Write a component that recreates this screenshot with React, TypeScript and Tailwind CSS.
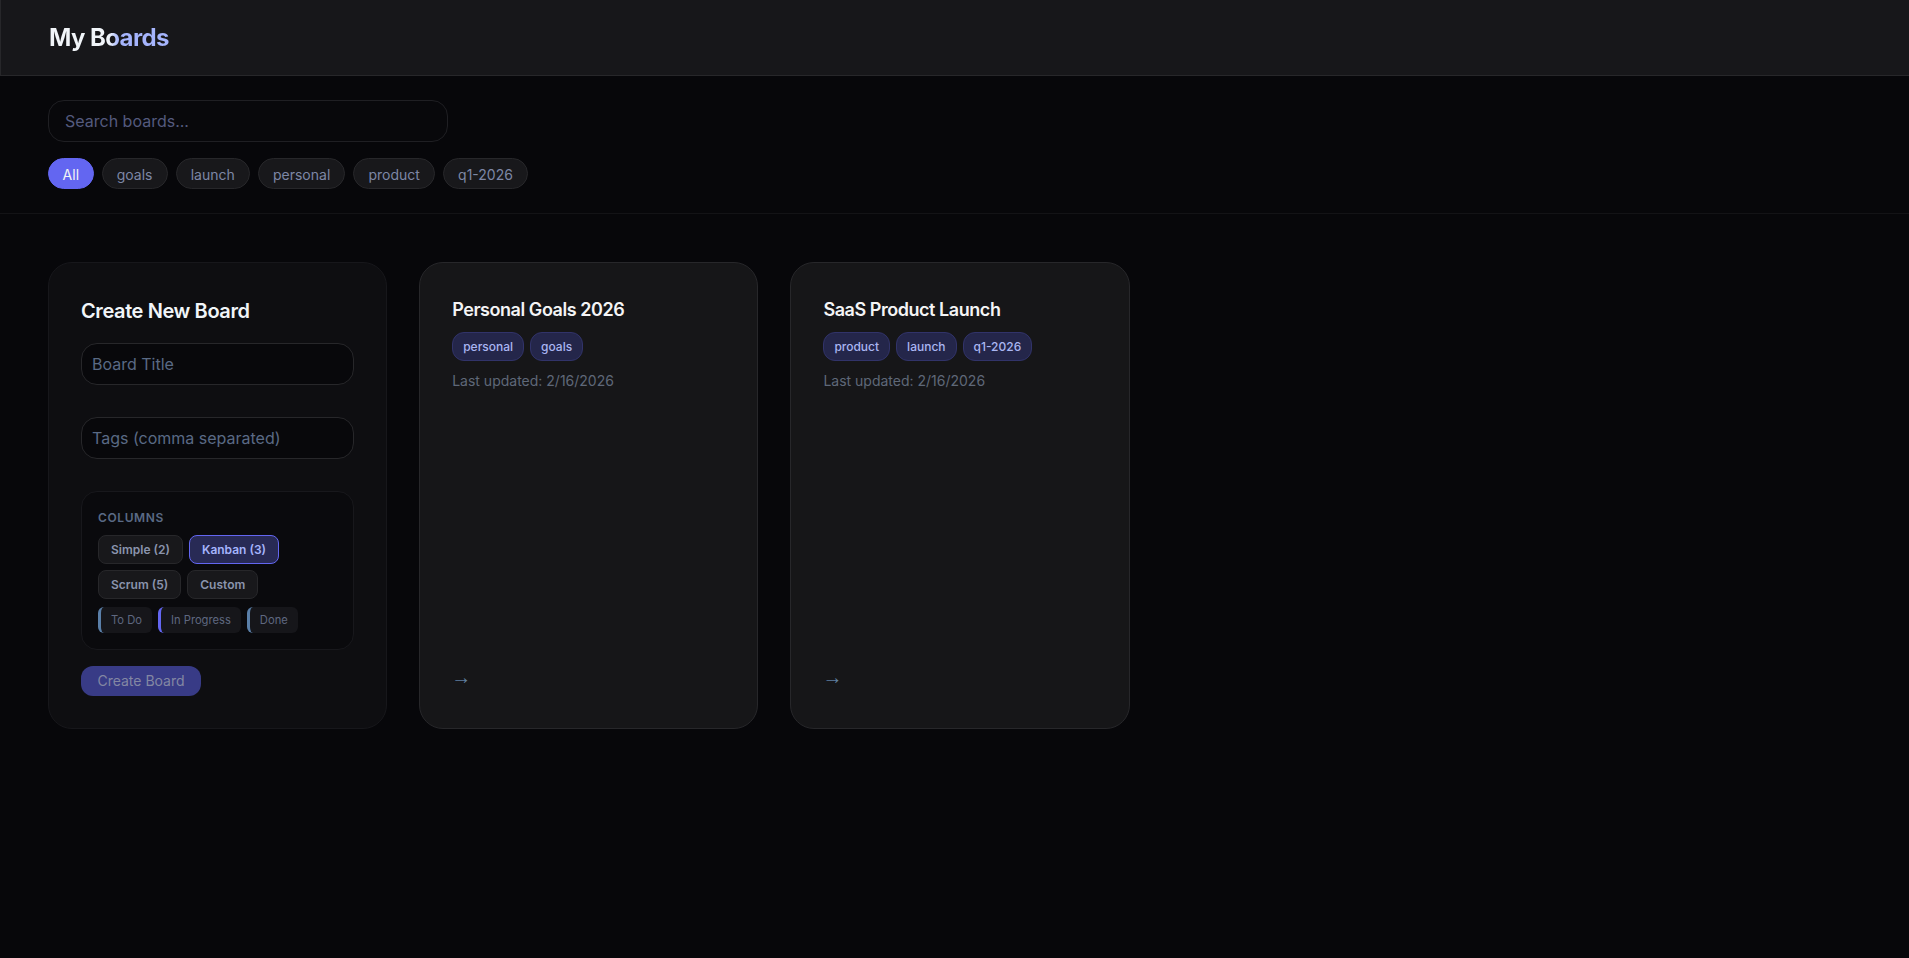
import React from "react";

const filters = ["goals", "launch", "personal", "product", "q1-2026"];

function Board({ title, tags }: { title: string; tags: string[] }) {
  return (
    <div className="flex flex-col rounded-[24px] border border-[#27272a] bg-[#161618] p-[32px]">
      <h3 className="text-[18px] leading-[30px] font-semibold tracking-[-0.45px] text-[#f4f4f5] mb-[7px]">{title}</h3>
      <div className="flex gap-[6px] mb-[9px]">
        {tags.map((t) => (
          <span key={t} className="h-[29px] flex items-center rounded-[12px] border border-[#313369] bg-[#24264a] px-[10px] text-[12px] font-medium text-[#aab6f2]">
            {t}
          </span>
        ))}
      </div>
      <p className="text-[14px] leading-[21px] text-[#5f6878]">Last updated: 2/16/2026</p>
      <div className="mt-auto -ml-[1px] text-[20px] leading-[37px] text-[#5f7f9f] font-['Liberation_Sans',sans-serif]">→</div>
    </div>
  );
}

export default function App() {
  return (
    <div className="min-h-[958px] bg-[#07070a] font-['Inter',sans-serif]">
      <header className="h-[76px] border-b border-l border-[#27272a] bg-[#17171a] pl-[48px] flex items-center">
        <h1 className="text-[24px] font-bold tracking-[-0.6px] bg-gradient-to-r from-[#f1f5f9] from-[50%] to-[#a5b4fc] to-[58%] bg-clip-text text-transparent">My Boards</h1>
      </header>

      <section className="border-b border-[#131316] px-[48px] py-[24px]">
        <div className="w-[400px] h-[42px] rounded-[16px] border border-[#1f1f23] bg-[#08080b] px-[16px] flex items-center text-[16px] text-[#545a7e]">
          Search boards...
        </div>
        <div className="flex gap-[8px] mt-[16px]">
          <span className="h-[31px] flex items-center rounded-full border border-[#6366f1] bg-[#6366f1] px-[13.6px] pt-[1px] text-[14px] text-[#f4f4f5]">All</span>
          {filters.map((f) => (
            <span key={f} className="h-[31px] flex items-center rounded-full border border-[#27272a] bg-[#18181b] px-[14.1px] pt-[1px] text-[14px] text-[#7d87a6]">
              {f}
            </span>
          ))}
        </div>
      </section>

      <main className="grid grid-cols-[339.2px_339.2px_339.2px] gap-[32px] px-[48px] pt-[48px]">
        <div className="h-[467px] rounded-[24px] border border-[#17171b] bg-[#0e0e11] px-[32px] pt-[32px]">
          <h2 className="text-[20px] leading-[32px] font-semibold tracking-[-0.4px] text-[#f1f5f9] mb-[16px]">Create New Board</h2>
          <div className="h-[42px] rounded-[16px] border border-[#27272a] bg-[#08080b] px-[10px] flex items-center text-[16px] text-[#5a6a85] mb-[32px]">Board Title</div>
          <div className="h-[42px] rounded-[16px] border border-[#27272a] bg-[#08080b] px-[10px] flex items-center text-[16px] text-[#5a6a85] mb-[32px]">Tags (comma separated)</div>
          <div className="rounded-[16px] border border-[#18181c] bg-[#0a0a0d] p-[16px]">
            <div className="text-[12px] leading-[20px] font-semibold tracking-[0.6px] text-[#5a6a85] mb-[7px]">COLUMNS</div>
            <div className="flex flex-wrap gap-[6px] mb-[8px]">
              {["Simple (2)", "Kanban (3)", "Scrum (5)", "Custom"].map((c) => (
                <span
                  key={c}
                  className={
                    c === "Kanban (3)"
                      ? "h-[29px] flex items-center rounded-[8px] border border-[#6366f1] bg-[#282a55] px-[12px] text-[12px] font-semibold text-[#a5b4fc]"
                      : "h-[29px] flex items-center rounded-[8px] border border-[#27272a] bg-[#18181b] px-[12px] text-[12px] font-semibold text-[#8a94ad]"
                  }
                >
                  {c}
                </span>
              ))}
            </div>
            <div className="flex gap-[6px]">
              {[
                ["To Do", "border-[#5a7fa8]"],
                ["In Progress", "border-[#6366f1]"],
                ["Done", "border-[#5a7fa8]"],
              ].map(([c, b]) => (
                <span key={c} className={`h-[26px] flex items-center rounded-[6px] border-l-[3px] bg-[#16161a] pl-[10px] pr-[10px] text-[11.2px] text-[#5f6880] ${b}`}>
                  {c}
                </span>
              ))}
            </div>
          </div>
          <div className="mt-[16px] w-[120px] h-[30px] pb-[1px] flex items-center justify-center rounded-[12px] bg-[#383b86] text-[14px] text-[#8387a3]">Create Board</div>
        </div>
        <Board title="Personal Goals 2026" tags={["personal", "goals"]} />
        <Board title="SaaS Product Launch" tags={["product", "launch", "q1-2026"]} />
      </main>
    </div>
  );
}
